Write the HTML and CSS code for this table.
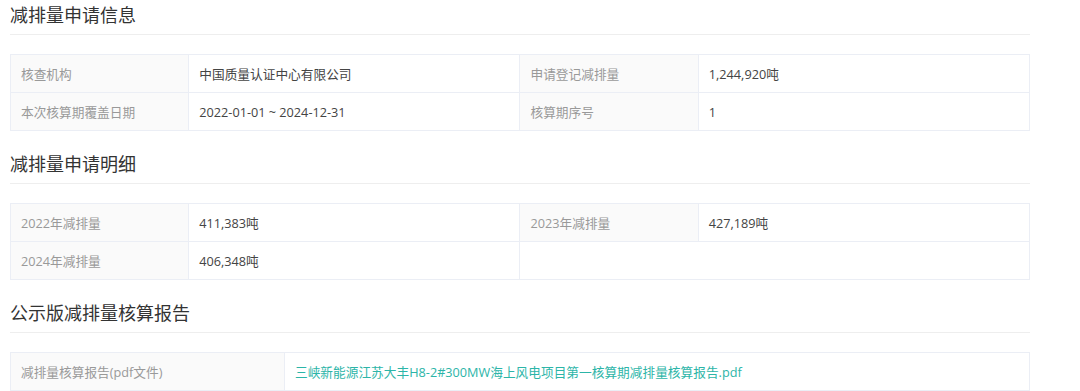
FILE: index.html
```html
<!DOCTYPE html>
<html lang="zh-CN">
<head>
<meta charset="utf-8">
<title>减排量申请信息</title>
<link rel="stylesheet" href="styles.css">
</head>
<body>
<div class="page">
  <section class="section">
    <h2 class="section-title">减排量申请信息</h2>
    <table class="info-table">
      <colgroup><col class="c-label"><col class="c-value"><col class="c-label"><col class="c-value"></colgroup>
      <tr>
        <th>核查机构</th><td>中国质量认证中心有限公司</td>
        <th>申请登记减排量</th><td>1,244,920吨</td>
      </tr>
      <tr>
        <th>本次核算期覆盖日期</th><td>2022-01-01 ~ 2024-12-31</td>
        <th>核算期序号</th><td>1</td>
      </tr>
    </table>
  </section>
  <section class="section">
    <h2 class="section-title">减排量申请明细</h2>
    <table class="info-table">
      <colgroup><col class="c-label"><col class="c-value"><col class="c-label"><col class="c-value"></colgroup>
      <tr>
        <th>2022年减排量</th><td>411,383吨</td>
        <th>2023年减排量</th><td>427,189吨</td>
      </tr>
      <tr>
        <th>2024年减排量</th><td>406,348吨</td>
        <td class="empty" colspan="2"></td>
      </tr>
    </table>
  </section>
  <section class="section">
    <h2 class="section-title">公示版减排量核算报告</h2>
    <table class="info-table">
      <colgroup><col class="c-label-wide"><col></colgroup>
      <tr>
        <th>减排量核算报告(pdf文件)</th>
        <td><a class="file-link" href="#">三峡新能源江苏大丰H8-2#300MW海上风电项目第一核算期减排量核算报告.pdf</a></td>
      </tr>
    </table>
  </section>
</div>
</body>
</html>
```

FILE: styles.css
```css
html, body {
  margin: 0;
  padding: 0;
  background: #ffffff;
}

body {
  font-family: "Open Sans", "Noto Sans CJK SC", sans-serif;
  color: #333333;
}

.page {
  width: 1020px;
  padding: 0 10px;
}

.section {
  margin-bottom: 18px;
}

.section-title {
  margin: 0 0 19px 0;
  height: 29px;
  line-height: 29px;
  padding-bottom: 5px;
  border-bottom: 1px solid #eeeeee;
  font-size: 18px;
  font-weight: normal;
  color: #333333;
  font-family: "Noto Sans CJK SC", sans-serif;
}

.info-table {
  width: 100%;
  border-collapse: collapse;
  table-layout: fixed;
  font-size: 12.7px;
}

.c-label { width: 17.5%; }
.c-value { width: 32.5%; }
.c-label-wide { width: 274px; }

.info-table th,
.info-table td {
  height: 38px;
  box-sizing: border-box;
  padding: 0 10px;
  border: 1px solid #ebeef5;
  text-align: left;
  font-weight: normal;
  white-space: nowrap;
}

.info-table th {
  background: #fafafa;
  color: #999999;
}

.info-table td {
  color: #444444;
}

.file-link {
  color: #2cb5a8;
  text-decoration: none;
}
```
